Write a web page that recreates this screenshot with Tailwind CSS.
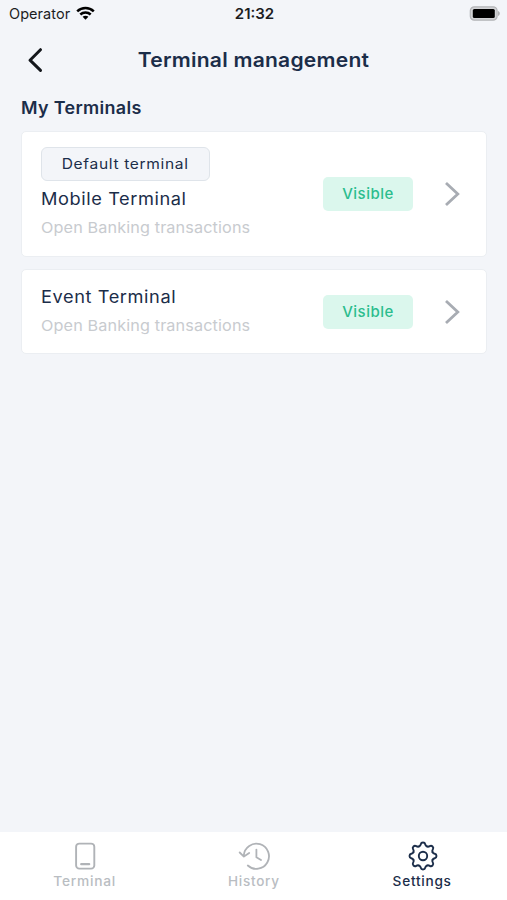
<!DOCTYPE html>
<html lang="en">
<head>
<meta charset="utf-8">
<title>Terminal management</title>
<script src="https://cdn.jsdelivr.net/npm/@tailwindcss/browser@4"></script>
</head>
<body class="bg-[#f3f5f9] font-['Inter',sans-serif] text-[#1b2d49]">
<div class="flex h-[900px] w-[507px] flex-col overflow-hidden whitespace-nowrap">
  <header class="grid h-7 shrink-0 grid-cols-3 items-center pr-[7px] pl-[9px] text-[#1c1d1f]">
    <div class="flex items-center gap-[6px] text-[14.5px] leading-7 tracking-[0.05px]">
      <span>Operator</span>
      <svg class="-mt-[3px] h-[14px] w-[19px]" viewBox="0 0 19 14" fill="none" stroke="#000" stroke-width="2.5"><path d="M1.2 5.4C5.9 .9 13.1.9 17.8 5.4M4.3 8.5c2.9-2.7 7.5-2.7 10.4 0"/><path d="M6.6 10.8c1.6-1.5 4.2-1.5 5.8 0L9.5 13.7z" fill="#000" stroke="none"/></svg>
    </div>
    <div class="text-center text-[15px] leading-7 font-semibold">21:32</div>
    <svg class="-mt-[2px] h-[15px] w-[31px] justify-self-end" viewBox="0 0 31 15"><rect x="1.3" y=".8" width="26.8" height="13.4" rx="4" fill="#d2d3d6" stroke="#b4b5b8" stroke-width="1.2"/><rect x="3.8" y="3" width="22" height="9" rx="1.5" fill="#000"/><path d="M29 5c2.4.8 2.4 4.2 0 5z" fill="#b0b1b4"/></svg>
  </header>

  <div class="grid h-[64px] shrink-0 grid-cols-[48px_1fr_48px] items-center">
    <svg class="ml-[26px] h-[26px] w-[18px]" viewBox="0 0 18 26" fill="none" stroke="#14171c" stroke-width="3" stroke-linecap="round" stroke-linejoin="round"><path d="M14.5 2.7 4 13.2l10.5 10.2"/></svg>
    <h1 class="scale-x-[1.08] text-center text-[19.5px] leading-6 font-semibold tracking-[0.22px]">Terminal management</h1>
  </div>

  <main class="flex grow flex-col pr-5 pl-[21px]">
    <h2 class="h-[39px] origin-left scale-x-[1.055] pt-[4px] text-[17px] leading-6 font-semibold tracking-[0.3px]">My Terminals</h2>
    <section class="flex h-[126px] items-center rounded-[5px] border border-[#ebeef2] bg-white pr-[25px] pb-px pl-[19px]">
      <div class="flex grow flex-col items-start">
        <span class="h-[34px] w-[169px] rounded-[6px] border border-[#dfe4ea] bg-[#f3f5f9] text-center text-[14px] leading-8 font-normal"><span class="inline-block scale-x-[1.11] tracking-[0.6px]">Default terminal</span></span>
        <span class="mt-[5px] origin-left scale-x-[1.07] text-[17px] leading-[26px] font-normal tracking-[0.55px]">Mobile Terminal</span>
        <span class="mt-[4px] origin-left scale-x-[1.08] text-[15px] leading-6 tracking-[0.12px] text-[#c8cbcf]">Open Banking transactions</span>
      </div>
      <span class="mr-[31px] h-[34px] w-[90px] rounded-[5px] bg-[#dbf7ed] text-center text-[15px] leading-[34px] font-medium tracking-[0.5px] text-[#2bbd8e]">Visible</span>
      <svg class="h-[26px] w-[17px]" viewBox="0 0 17 26" fill="none" stroke="#a8acb3" stroke-width="2.8"><path d="m2 2 11.8 11L2 24"/></svg>
    </section>
    <section class="mt-3 flex h-[85px] items-center rounded-[5px] border border-[#ebeef2] bg-white pr-[25px] pl-[19px]">
      <div class="-mt-[2px] flex grow flex-col items-start">
        <span class="origin-left scale-x-[1.07] text-[17px] leading-[26px] font-normal tracking-[0.55px]">Event Terminal</span>
        <span class="mt-[4px] origin-left scale-x-[1.08] text-[15px] leading-6 tracking-[0.12px] text-[#c8cbcf]">Open Banking transactions</span>
      </div>
      <span class="mr-[31px] h-[34px] w-[90px] rounded-[5px] bg-[#dbf7ed] text-center text-[15px] leading-[34px] font-medium tracking-[0.5px] text-[#2bbd8e]">Visible</span>
      <svg class="h-[26px] w-[17px]" viewBox="0 0 17 26" fill="none" stroke="#a8acb3" stroke-width="2.8"><path d="m2 2 11.8 11L2 24"/></svg>
    </section>
  </main>

  <nav class="grid h-[68px] shrink-0 grid-cols-3 bg-white pt-[9px] text-[13px] leading-5 font-medium text-[#b9bdc2]">
    <div class="flex flex-col items-center">
      <svg class="h-[30px] w-[30px]" viewBox="-15 -15 30 30" fill="none" stroke="#b0b3b7" stroke-width="1.9" stroke-linecap="round"><rect x="-8.9" y="-12.4" width="18.2" height="25" rx="3.2"/><path d="M-3.8 8.2h8" stroke-width="2.2"/></svg>
      <span class="scale-x-[1.06] tracking-[0.7px]">Terminal</span>
    </div>
    <div class="flex flex-col items-center">
      <svg class="h-[30px] w-[34px]" viewBox="-17 -15 34 30" fill="none" stroke="#b0b3b7" stroke-width="1.8" stroke-linecap="round" stroke-linejoin="round"><path d="M-10.2-.6A12.6 12.6 0 1 1-6.2 9.5"/><path d="m-14.3-3.5 4.2 4.1L-4.8-3M2.4-6.4v7.6L7 4"/></svg>
      <span class="scale-x-[1.04] tracking-[0.7px]">History</span>
    </div>
    <div class="flex flex-col items-center text-[#1b2d49]">
      <svg class="h-[30px] w-[30px]" viewBox="-15 -15 30 30" fill="none" stroke="#1b2d49" stroke-width="1.9" stroke-linecap="round">
        <defs><path id="tooth" d="M-3.94-9.52C-1-10.7-3.5-13.5 0-13.5S1-10.7 3.94-9.52"/></defs>
        <use href="#tooth"/><use href="#tooth" transform="rotate(45)"/><use href="#tooth" transform="rotate(90)"/><use href="#tooth" transform="rotate(135)"/><use href="#tooth" transform="rotate(180)"/><use href="#tooth" transform="rotate(225)"/><use href="#tooth" transform="rotate(270)"/><use href="#tooth" transform="rotate(315)"/>
        <circle r="4.2"/>
      </svg>
      <span class="scale-x-[1.05] tracking-[0.7px]">Settings</span>
    </div>
  </nav>
</div>
</body>
</html>
